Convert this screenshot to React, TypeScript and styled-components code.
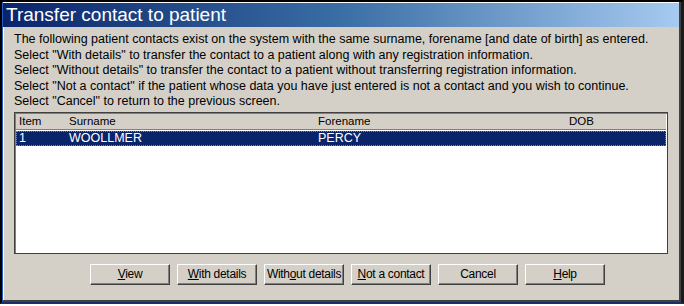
import styled, { createGlobalStyle } from 'styled-components';

const GlobalStyle = createGlobalStyle`
  html, body {
    margin: 0;
    padding: 0;
    background: #ffffff;
  }
  body {
    font-family: "Liberation Sans", Arial, sans-serif;
  }
`;

const Window = styled.div`
  width: 684px;
  height: 304px;
  box-sizing: border-box;
  border-top: 2px solid #000;
  border-left: 2px solid #000;
  border-right: 3px solid #1a1a1a;
  border-bottom: 2px solid #1b2f6b;
  background: #404040;
  display: flex;
  flex-direction: column;
`;

const Inner = styled.div`
  flex: 1;
  display: flex;
  flex-direction: column;
  border-left: 1px solid #2a5bc4;
  border-right: 2px solid #404040;
  border-bottom: 2px solid #404040;
  background: #d4d0c8;
  box-shadow: inset 1px 1px 0 #ffffff;
`;

const TitleBar = styled.div`
  height: 24px;
  margin-top: 1px;
  display: flex;
  align-items: center;
  padding-left: 3px;
  background: linear-gradient(to right, #0a246a 0%, #3a6ea5 50%, #a6caf0 100%);
  color: #fff;
  font-size: 19px;
`;

const Body = styled.div`
  flex: 1;
  display: flex;
  flex-direction: column;
  padding: 5px 11px 0 11px;
`;

const Message = styled.div`
  font-size: 12.5px;
  line-height: 15.6px;
  color: #000;
  white-space: nowrap;
`;

const ListView = styled.div`
  margin-top: 2px;
  height: 142px;
  box-sizing: border-box;
  background: #fff;
  border: 1px solid #404040;
  box-shadow: inset 1px 1px 0 #808080;
  padding: 1px;
`;

const Row = styled.div<{ $selected?: boolean; $header?: boolean }>`
  display: grid;
  grid-template-columns: 50px 249px 251px 1fr;
  height: 15px;
  align-items: center;
  font-size: ${p => (p.$header ? 11.5 : 12.5)}px;
  color: ${p => (p.$selected ? '#fff' : '#000')};
  background: ${p => (p.$selected ? '#0a246a' : p.$header ? '#d4d0c8' : 'transparent')};
  border-bottom: ${p => (p.$header ? '1px solid #808080' : 'none')};
  outline: ${p => (p.$selected ? '1px dotted #8a8a8a' : 'none')};
  outline-offset: -1px;
  margin-bottom: ${p => (p.$header ? 1 : 0)}px;
`;

const Cell = styled.div`
  padding-left: 3px;
  white-space: nowrap;
  overflow: hidden;
`;

const Buttons = styled.div`
  display: flex;
  gap: 7px;
  padding-left: 76px;
  margin-top: 10px;
`;

const Button = styled.button`
  width: 80px;
  height: 21px;
  padding: 0;
  background: #d4d0c8;
  font-family: "Liberation Sans", Arial, sans-serif;
  font-size: 12px;
  color: #000;
  border: none;
  border-top: 1px solid #fff;
  border-left: 1px solid #fff;
  border-right: 1px solid #404040;
  border-bottom: 1px solid #404040;
  box-shadow: inset -1px -1px 0 #808080;
  letter-spacing: -0.3px;
  u { text-decoration: underline; }
`;

const columns = ['Item', 'Surname', 'Forename', 'DOB'];

const rows = [['1', 'WOOLLMER', 'PERCY', '']];

const lines = [
  'The following patient contacts exist on the system with the same surname, forename [and date of birth] as entered.',
  'Select "With details" to transfer the contact to a patient along with any registration information.',
  'Select "Without details" to transfer the contact to a patient without transferring registration information.',
  'Select "Not a contact" if the patient whose data you have just entered is not a contact and you wish to continue.',
  'Select "Cancel" to return to the previous screen.',
];

export default function App() {
  return (
    <>
      <GlobalStyle />
      <Window>
        <Inner>
          <TitleBar>Transfer contact to patient</TitleBar>
          <Body>
            <Message>
              {lines.map(l => (
                <div key={l}>{l}</div>
              ))}
            </Message>
            <ListView>
              <Row $header>
                {columns.map(c => (
                  <Cell key={c}>{c}</Cell>
                ))}
              </Row>
              {rows.map(r => (
                <Row key={r[0]} $selected>
                  {r.map((c, i) => (
                    <Cell key={i}>{c}</Cell>
                  ))}
                </Row>
              ))}
            </ListView>
            <Buttons>
              <Button><u>V</u>iew</Button>
              <Button><u>W</u>ith details</Button>
              <Button>With<u>o</u>ut details</Button>
              <Button><u>N</u>ot a contact</Button>
              <Button>Cancel</Button>
              <Button><u>H</u>elp</Button>
            </Buttons>
          </Body>
        </Inner>
      </Window>
    </>
  );
}
